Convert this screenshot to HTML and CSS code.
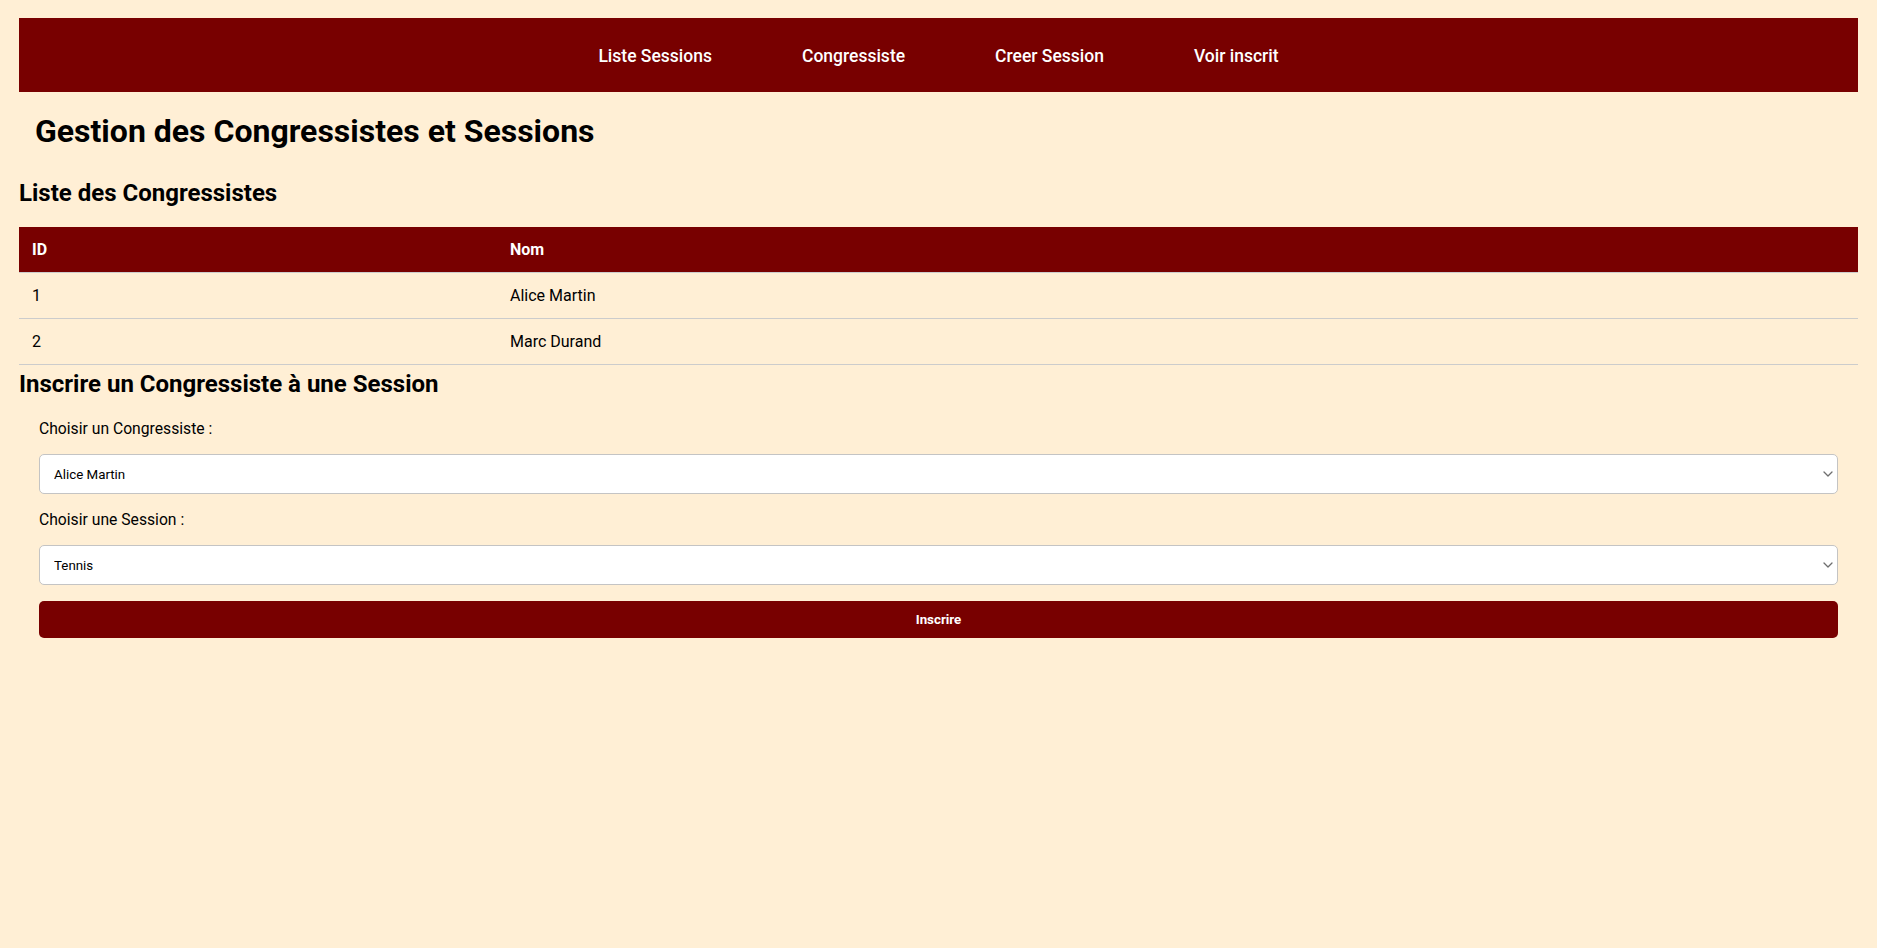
FILE: index.html
```html
<!DOCTYPE html>
<html lang="fr">
<head>
<meta charset="utf-8">
<title>Gestion des Congressistes et Sessions</title>
<link rel="stylesheet" href="styles.css">
</head>
<body>
<nav class="topnav">
  <a href="#" class="nav-link">Liste Sessions</a>
  <a href="#" class="nav-link">Congressiste</a>
  <a href="#" class="nav-link">Creer Session</a>
  <a href="#" class="nav-link">Voir inscrit</a>
</nav>
<h1 class="page-title">Gestion des Congressistes et Sessions</h1>
<h2 class="section-title">Liste des Congressistes</h2>
<table class="data-table">
  <colgroup><col class="col-id"><col></colgroup>
  <thead>
    <tr><th>ID</th><th>Nom</th></tr>
  </thead>
  <tbody>
    <tr><td>1</td><td>Alice Martin</td></tr>
    <tr><td>2</td><td>Marc Durand</td></tr>
  </tbody>
</table>
<h2 class="section-title section-title--tight">Inscrire un Congressiste à une Session</h2>
<form class="inscription-form">
  <label class="form-label" for="congressiste">Choisir un Congressiste :</label>
  <div class="select-wrap">
    <select id="congressiste" class="form-select">
      <option>Alice Martin</option>
      <option>Marc Durand</option>
    </select>
    <svg class="select-chevron" width="10" height="6" viewBox="0 0 10 6" aria-hidden="true"><path d="M1 1 L5 5 L9 1" fill="none" stroke="#6e6e6e" stroke-width="1.3" stroke-linecap="round" stroke-linejoin="round"/></svg>
  </div>
  <label class="form-label" for="session">Choisir une Session :</label>
  <div class="select-wrap">
    <select id="session" class="form-select">
      <option>Tennis</option>
    </select>
    <svg class="select-chevron" width="10" height="6" viewBox="0 0 10 6" aria-hidden="true"><path d="M1 1 L5 5 L9 1" fill="none" stroke="#6e6e6e" stroke-width="1.3" stroke-linecap="round" stroke-linejoin="round"/></svg>
  </div>
  <button type="button" class="form-button">Inscrire</button>
</form>
</body>
</html>
```
FILE: styles.css
```css
html, body {
  margin: 0;
  padding: 0;
}
body {
  background: #ffefd5;
  padding: 18px 19px;
  font-family: Roboto, "Liberation Sans", sans-serif;
  color: #000;
}
.topnav {
  height: 74px;
  background: #780000;
  display: flex;
  justify-content: center;
  align-items: center;
  gap: 90px;
}
.nav-link {
  color: #fff;
  text-decoration: none;
  font-size: 17.5px;
  font-weight: 500;
  line-height: 24px;
  position: relative;
  top: 1px;
}
.page-title {
  font-size: 32px;
  font-weight: 700;
  line-height: 40px;
  margin: 19px 0 0 16px;
}
.section-title {
  font-size: 24px;
  font-weight: 700;
  line-height: 32px;
  margin: 26px 0 18px 0;
}
.section-title--tight {
  margin: 3px 0 18px 0;
}
.data-table {
  width: 100%;
  border-collapse: collapse;
  table-layout: fixed;
  font-size: 16px;
  line-height: 21px;
}
.col-id {
  width: 478px;
}
.data-table th,
.data-table td {
  text-align: left;
  padding: 12px 13px;
  border-bottom: 1px solid #cccccc;
}
.data-table th {
  background: #780000;
  color: #fff;
  font-weight: 700;
}
.inscription-form {
  display: flex;
  flex-direction: column;
  gap: 15px;
  padding: 0 20px;
}
.form-label {
  font-size: 15.7px;
  line-height: 21px;
  height: 21px;
}
.select-wrap {
  position: relative;
}
.form-select {
  display: block;
  height: 40px;
  width: 100%;
  box-sizing: border-box;
  padding: 0 14px;
  border: 1px solid #c4c4c4;
  border-radius: 5px;
  background: #fff;
  font-family: Roboto, "Liberation Sans", sans-serif;
  font-size: 13.33px;
  color: #000;
  -webkit-appearance: none;
  appearance: none;
}
.select-chevron {
  position: absolute;
  right: 5px;
  top: 17px;
  pointer-events: none;
}
.form-button {
  height: 37px;
  width: 100%;
  margin-top: 1px;
  border: none;
  border-radius: 5px;
  background: #780000;
  color: #fff;
  font-family: Roboto, "Liberation Sans", sans-serif;
  font-size: 13.33px;
  font-weight: 700;
}
```
